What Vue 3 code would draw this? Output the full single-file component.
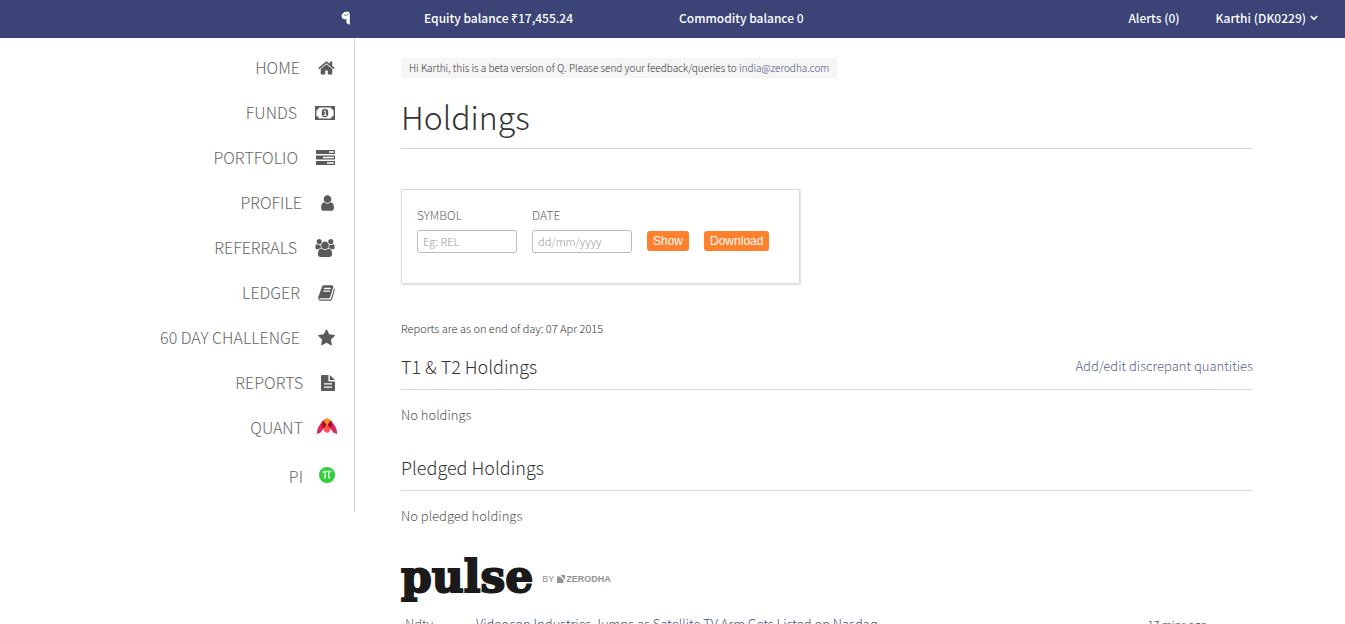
<script setup>
const menu = [
  { label: 'HOME', icon: 'home' },
  { label: 'FUNDS', icon: 'money' },
  { label: 'PORTFOLIO', icon: 'tasks' },
  { label: 'PROFILE', icon: 'user' },
  { label: 'REFERRALS', icon: 'users' },
  { label: 'LEDGER', icon: 'book' },
  { label: '60 DAY CHALLENGE', icon: 'star' },
  { label: 'REPORTS', icon: 'file' },
  { label: 'QUANT', icon: 'quant' },
  { label: 'PI', icon: 'pi' },
]
const sections = [
  { title: 'T1 & T2 Holdings', link: 'Add/edit discrepant quantities', empty: 'No holdings' },
  { title: 'Pledged Holdings', link: '', empty: 'No pledged holdings' },
]
</script>

<template>
  <div class="page">
    <header class="topbar">
      <a href="#" class="brand" aria-label="Q">
        <svg width="10" height="15" viewBox="0 0 10 15">
          <path d="M0.600 3.600 3.400 1 7.400 0.400 8.800 2.400V14L5.400 12V7.800L3.200 8.600 0.800 6.800Z" fill="#fff" />
          <path d="M2.600 3.800 4.800 4.600 7.400 2.800" fill="none" stroke="#3b4377" stroke-width="0.600" />
        </svg>
      </a>
      <span class="equity">Equity balance ₹17,455.24</span>
      <span class="commodity">Commodity balance 0</span>
      <a href="#" class="alerts">Alerts (0)</a>
      <button type="button" class="account">
        Karthi (DK0229)
        <svg width="8" height="6" viewBox="0 0 8 6"><path d="M0.8 1 4 4.3 7.2 1" fill="none" stroke="#fff" stroke-width="1.6" /></svg>
      </button>
    </header>

    <div class="body">
      <nav class="sidebar">
        <a v-for="m in menu" :key="m.label" href="#" class="item" :class="m.icon">
          <span>{{ m.label }}</span>
          <svg v-if="m.icon === 'home'" width="17" height="18" viewBox="64 0 1664 1792"><path d="M1472 992v480q0 26-19 45t-45 19h-384v-384h-256v384h-384q-26 0-45-19t-19-45v-480q0-1 .5-3t.5-3l575-474 575 474q1 2 1 6zm223-69l-62 74q-8 9-21 11h-3q-13 0-21-7l-692-577-692 577q-12 8-24 7-13-2-21-11l-62-74q-8-10-7-23.5t11-21.5l719-599q32-26 76-26t76 26l244 204v-195q0-14 9-23t23-9h192q14 0 23 9t9 23v408l219 182q10 8 11 21.5t-7 23.5z" /></svg>
          <svg v-else-if="m.icon === 'money'" width="20" height="14" viewBox="0 0 20 14">
            <path fill-rule="evenodd" d="M0 0H20V14H0ZM4 1.4A2.8 2.8 0 0 1 1.4 4V10A2.8 2.8 0 0 1 4 12.6H16A2.8 2.8 0 0 1 18.6 10V4A2.8 2.8 0 0 1 16 1.4Z" />
            <ellipse cx="10" cy="7" rx="3.3" ry="4.2" />
            <path d="M8.9 5.4 10.2 4.4V9.2M8.6 9.4H11.6" fill="none" stroke="#fff" stroke-width="1" />
          </svg>
          <svg v-else-if="m.icon === 'tasks'" width="19" height="15" viewBox="0 0 19 15">
            <path fill-rule="evenodd" d="M.5 0h18q.5 0 .5.5V4H0V.5Q0 0 .5 0ZM13 1.2V2.8H17.8V1.2ZM0 5.5H19V9.5H0ZM7 6.7V8.3H17.8V6.7ZM0 11H19V14.5q0 .5-.5.5H.5Q0 15 0 14.5ZM11 12.2V13.8H17.8V12.2Z" />
          </svg>
          <svg v-else-if="m.icon === 'user'" width="15" height="18" viewBox="256 0 1280 1792"><path d="M1536 1399q0 109-62.5 187t-150.5 78h-854q-88 0-150.5-78t-62.5-187q0-85 8.5-160.5t31.5-152 58.5-131 94-89 134.5-34.5q131 128 313 128t313-128q76 0 134.5 34.5t94 89 58.5 131 31.5 152 8.5 160.5zm-256-887q0 159-112.5 271.5t-271.5 112.5-271.5-112.5-112.5-271.5 112.5-271.5 271.5-112.5 271.5 112.5 112.5 271.5z" /></svg>
          <svg v-else-if="m.icon === 'users'" width="20" height="18" viewBox="64 0 1920 1792"><path d="M657 896q-162 5-265 128h-134q-82 0-138-40.5t-56-118.5q0-353 124-353 6 0 43.5 21t97.5 42.5 119 21.5q67 0 133-23-5 37-5 66 0 139 81 256zm1071 637q0 120-73 189.5t-194 69.5h-874q-121 0-194-69.5t-73-189.5q0-53 3.5-103.5t14-109 26.5-108.5 43-97.5 62-81 85.5-53.5 111.5-20q10 0 43 21.5t73 48 107 48 135 21.5 135-21.5 107-48 73-48 43-21.5q61 0 111.5 20t85.5 53.5 62 81 43 97.5 26.5 108.5 14 109 3.5 103.5zm-1024-1277q0 106-75 181t-181 75-181-75-75-181 75-181 181-75 181 75 75 181zm704 384q0 159-112.5 271.5t-271.5 112.5-271.5-112.5-112.5-271.5 112.5-271.5 271.5-112.5 271.5 112.5 112.5 271.5zm576 225q0 78-56 118.5t-138 40.5h-134q-103-123-265-128 81-117 81-256 0-29-5-66 66 23 133 23 59 0 119-21.5t97.5-42.5 43.5-21q124 0 124 353zm-128-609q0 106-75 181t-181 75-181-75-75-181 75-181 181-75 181 75 75 181z" /></svg>
          <svg v-else-if="m.icon === 'book'" width="17" height="18" viewBox="64 0 1664 1792"><path d="M1703 478q40 57 18 129l-275 906q-19 64-76.5 107.5t-122.5 43.5h-923q-77 0-148.5-53.5t-99.5-131.5q-24-67-2-127 0-4 3-27t4-37q1-8-3-21.5t-3-19.5q2-11 8-21t16.5-23.5 16.5-23.5q23-38 45-91.5t30-91.5q3-10 .5-30t-.5-28q3-11 17-28t17-23q21-36 42-92t25-90q1-9-2.5-32t.5-28q4-13 22-30.5t22-22.5q19-26 42.5-84.5t27.5-96.5q1-8-3-25.5t-2-26.5q2-8 9-18t18-23 17-21q8-12 16.5-30.5t15-35 16-36 19.5-32 26.5-23.5 36-11.5 47.5 5.5l-1 3q38-9 51-9h761q74 0 114 56t18 130l-274 906q-36 119-71.5 153.5t-128.5 34.5h-869q-27 0-38 15-11 16-1 43 24 70 144 70h923q29 0 56-15.5t35-41.5l300-987q7-22 5-57 38 15 59 43zm-1064 2q-4 13 2 22.5t20 9.5h608q13 0 25.5-9.5t16.5-22.5l21-64q4-13-2-22.5t-20-9.5h-608q-13 0-25.5 9.5t-16.5 22.5zm-83 256q-4 13 2 22.5t20 9.5h608q13 0 25.5-9.5t16.5-22.5l21-64q4-13-2-22.5t-20-9.5h-608q-13 0-25.5 9.5t-16.5 22.5z" /></svg>
          <svg v-else-if="m.icon === 'star'" width="17" height="18" viewBox="64 0 1664 1792"><path d="M1728 647q0 22-26 48l-363 354 86 500q1 7 1 20 0 21-10.5 35.5t-30.5 14.5q-19 0-40-12l-449-236-449 236q-22 12-40 12-21 0-31.5-14.5t-10.5-35.5q0-6 2-20l86-500-364-354q-25-27-25-48 0-37 56-46l502-73 225-455q19-41 49-41t49 41l225 455 502 73q56 9 56 46z" /></svg>
          <svg v-else-if="m.icon === 'file'" width="14" height="16" viewBox="0 0 14 16">
            <path fill-rule="evenodd" d="M1 0H7.4V5.4Q7.4 6.4 8.4 6.4H14V15Q14 16 13 16H1Q0 16 0 15V1Q0 0 1 0ZM3 8.2V9.5H11V8.2ZM3 11.5V12.8H11V11.5Z" />
            <path d="M8.8 0 14 5H8.8Z" />
          </svg>
          <svg v-else-if="m.icon === 'quant'" width="20" height="16" viewBox="0 0 20 16">
            <path d="M6 2.500Q0.500 9 0 13.500V16L3.400 14.800 9 7.500 10 4ZM14 2.500Q19.500 9 20 13.500V16L16.600 14.800 11 7.500 10 4Z" fill="#dc2660" />
            <path d="M10 5 13.500 11.500Q12.500 14.800 10 14.800T6.500 11.500Z" fill="#ff5356" />
            <path d="M6 2.500 10 2 14 2.500 15 8 12.800 10.500 10 5 7.200 10.500 5 8Z" fill="#a90a1c" />
            <path d="M6 2.500Q10-2 14 2.500L12 4.500Q10 9 8 4.500Z" fill="#f0932a" />
          </svg>
          <svg v-else width="16" height="16" viewBox="0 0 16 16">
            <circle cx="8" cy="8" r="8" fill="#30cf3a" />
            <path d="M3.600 5.800Q4 4.400 5.400 4.400H12.400M6.200 4.600V9.500Q6.200 11 4.800 11.200M9.800 4.600V9.800Q9.800 11.200 11.400 11" fill="none" stroke="#d9f8db" stroke-width="1.500" />
          </svg>
        </a>
      </nav>

      <main class="content">
        <p class="notice">Hi Karthi, this is a beta version of Q. Please send your feedback/queries to <a href="#">india@zerodha.com</a></p>
        <h1>Holdings</h1>

        <form class="filter" @submit.prevent>
          <div class="field">
            <label for="symbol">SYMBOL</label>
            <input id="symbol" type="text" placeholder="Eg: REL" />
          </div>
          <div class="field">
            <label for="date">DATE</label>
            <input id="date" type="text" placeholder="dd/mm/yyyy" />
          </div>
          <button type="submit">Show</button>
          <button type="button">Download</button>
        </form>

        <p class="asof">Reports are as on end of day: 07 Apr 2015</p>

        <section v-for="s in sections" :key="s.title">
          <div class="head">
            <h2>{{ s.title }}</h2>
            <a v-if="s.link" href="#">{{ s.link }}</a>
          </div>
          <p class="empty">{{ s.empty }}</p>
        </section>

        <div class="pulse">
          <strong>pulse</strong>
          <span class="by">BY</span>
          <svg width="8" height="8" viewBox="0 0 8 8"><path d="M0 1.500H3L6.500 5V8H0ZM3.500 0H8V5Z" fill="#929292" /></svg>
          <span class="zerodha">ZERODHA</span>
        </div>
        <div class="news">
          <span class="source">Ndtv</span>
          <a href="#">Videocon Industries Jumps as Satellite TV Arm Gets Listed on Nasdaq</a>
          <time>17 mins ago</time>
        </div>
      </main>
    </div>
  </div>
</template>

<style>
body {
  margin: 0;
  background: #fff;
}
</style>

<style scoped>
.page {
  height: 100vh;
  overflow: hidden;
  font-family: "Noto Sans CJK SC", "Noto Sans", sans-serif;
  font-weight: 300;
  color: #333;
}
a {
  color: inherit;
  text-decoration: none;
}
p, h1, h2 {
  margin: 0;
  font-weight: 300;
}
.topbar {
  box-sizing: border-box;
  display: flex;
  align-items: center;
  height: 38px;
  padding: 0 27px 2px 341px;
  background: #3b4377;
  color: #fff;
  font-size: 12px;
  font-weight: 500;
  line-height: 18px;
  white-space: nowrap;
}
.brand {
  display: flex;
  width: 83px;
}
.equity {
  width: 255px;
}
.commodity {
  flex: 1;
}
.alerts {
  margin-right: 36px;
}
.account {
  display: flex;
  align-items: center;
  gap: 4px;
  padding: 0;
  border: 0;
  background: none;
  color: inherit;
  font: inherit;
}
.body {
  display: flex;
  align-items: flex-start;
}
.sidebar {
  box-sizing: border-box;
  flex: 0 0 355px;
  padding: 7px 19px 13px 0;
  border-right: 1px solid #d4d4d4;
}
.item {
  display: flex;
  align-items: center;
  justify-content: flex-end;
  gap: 18px;
  height: 45px;
  font-size: 16px;
  line-height: 24px;
  color: #666;
}
.item span {
  padding-bottom: 2px;
}
.item svg {
  fill: #5a5a5a;
}
.item.quant {
  gap: 14px;
  margin-right: -2px;
}
.item.pi {
  gap: 16px;
  margin-top: 4px;
}
.item.quant svg,
.item.pi svg {
  margin-bottom: 4px;
}
.content {
  flex: 1;
  padding: 20px 92px 0 46px;
}
.notice {
  width: fit-content;
  padding: 0 8px;
  background: #f5f5f5;
  font-size: 10px;
  line-height: 20px;
}
.notice a {
  color: #4a5080;
}
h1 {
  padding: 14px 0 7px;
  border-bottom: 1px solid #d4d4d4;
  font-size: 32px;
  line-height: 49px;
}
.filter {
  box-sizing: border-box;
  display: flex;
  align-items: flex-end;
  gap: 15px;
  width: fit-content;
  margin-top: 40px;
  padding: 15px 30px 30px 15px;
  border: 1px solid #d9d9d9;
  border-radius: 1px;
  box-shadow: 1px 1px 2px #ddd;
}
.field {
  display: flex;
  flex-direction: column;
  gap: 5px;
  font-size: 12px;
  line-height: 20px;
  color: #666;
}
.field input {
  box-sizing: border-box;
  width: 100px;
  height: 23px;
  padding: 0 5px 2px;
  border: 1px solid #bbb;
  border-radius: 3px;
  font-family: inherit;
  font-size: 11px;
  font-weight: 300;
}
.field input::placeholder {
  color: #999;
}
.filter button {
  height: 20px;
  margin-bottom: 2px;
  padding: 0 6px;
  border: 0;
  border-radius: 3px;
  background: #ff812d;
  color: #fff;
  font: 12px/20px "Liberation Sans", Arial, sans-serif;
}
.asof {
  margin-top: 34px;
  font-size: 11px;
  line-height: 20px;
}
.head {
  box-sizing: border-box;
  display: flex;
  align-items: center;
  justify-content: space-between;
  height: 46px;
  margin-top: 6px;
  padding-bottom: 2px;
  border-bottom: 1px solid #d9d9d9;
}
h2 {
  font-size: 18px;
  line-height: 28px;
}
.head a {
  font-size: 13px;
  line-height: 20px;
  color: #5a5f88;
}
.empty {
  padding: 15px 0 14px;
  font-size: 13px;
  line-height: 20px;
  color: #555;
}
.pulse {
  display: flex;
  align-items: center;
  margin-top: 14px;
  color: #929292;
  font: 9px/50px "Liberation Sans", Arial, sans-serif;
}
.pulse strong {
  margin: -2px 9px 2px 0;
  color: #1a1a1a;
  font: bold 44px/50px "DejaVu Serif", serif;
  -webkit-text-stroke: 2px #1a1a1a;
}
.by {
  margin-right: 3px;
}
.zerodha {
  margin-left: 1px;
  font-weight: 700;
}
.news {
  display: flex;
  padding: 10px 46px 10px 4px;
  font-size: 13px;
  line-height: 20px;
  white-space: nowrap;
}
.source {
  width: 71px;
  color: #666;
}
.news a {
  flex: 1;
  color: #4a5080;
}
.news time {
  font-size: 11px;
}
</style>
